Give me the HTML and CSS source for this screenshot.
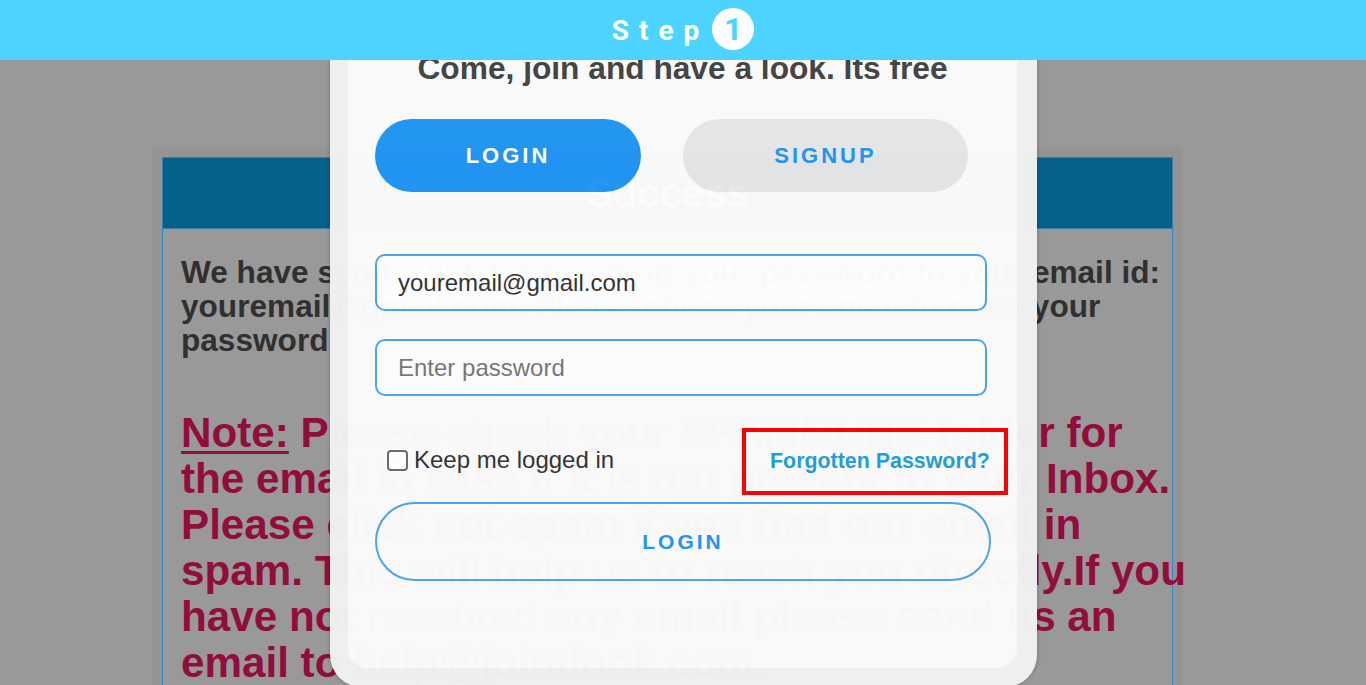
FILE: index.html
```html
<!DOCTYPE html>
<html lang="en">
<head>
<meta charset="utf-8">
<title>Step 1</title>
<link rel="stylesheet" href="styles.css">
</head>
<body>
<div class="stepbar">
  <span class="step-word">Step</span>
  <span class="step-num">1</span>
</div>

<div class="page">
  <div class="notice">
    <div class="notice-head">Success</div>
    <div class="notice-body">
      <p class="sent">We have send a link for resetting your password to your email id:<br>youremail@gmail.com. Please check your email to reset your<br>password.</p>
      <p class="note"><u>Note:</u> Please check your SPAM/JUNK folder for<br>the email in case if it is not present in your Inbox.<br>Please click not spam if you find our email in<br>spam. This will help us to reach you directly.If you<br>have not received any email please send us an<br>email to help@jointlook.com.</p>
    </div>
  </div>
</div>

<div class="modal">
  <div class="modal-inner">
    <div class="title">Come, join and have a look. Its free</div>
    <div class="tabs">
      <div class="tab tab-active">LOGIN</div>
      <div class="tab tab-idle">SIGNUP</div>
    </div>
    <div class="field field-email">youremail@gmail.com</div>
    <div class="field field-pass">Enter password</div>
    <div class="row">
      <label class="keep"><span class="box"></span>Keep me logged in</label>
      <div class="highlight"><span class="forgot">Forgotten Password?</span></div>
    </div>
    <div class="submit">LOGIN</div>
  </div>
</div>
</body>
</html>
```

FILE: styles.css
```css
html, body {
  margin: 0;
  padding: 0;
}
body {
  width: 1366px;
  height: 685px;
  overflow: hidden;
  background: #999999;
  font-family: "Liberation Sans", Arial, sans-serif;
  position: relative;
}

/* top step bar */
.stepbar {
  position: absolute;
  top: 0;
  left: 0;
  right: 0;
  height: 60px;
  background: #4cd3ff;
  z-index: 10;
  display: flex;
  align-items: center;
  justify-content: center;
}
.step-word {
  font-family: Roboto, "Liberation Sans", sans-serif;
  font-weight: 700;
  font-size: 28px;
  letter-spacing: 10px;
  color: #ffffff;
  line-height: 1;
  margin-right: 3px;
  margin-top: 2px;
}
.step-num {
  width: 42px;
  height: 42px;
  border-radius: 50%;
  background: #ffffff;
  color: #4cd3ff;
  font-family: Roboto, "Liberation Sans", sans-serif;
  font-weight: 700;
  font-size: 32px;
  display: flex;
  align-items: center;
  justify-content: center;
  line-height: 1;
  margin-top: -2px;
}

/* background dialog */
.page {
  padding: 147px 0 0 152px;
}
.notice {
  width: 1031px;
  box-sizing: border-box;
  background: #949494;
  border-radius: 6px 6px 0 0;
  padding: 10px 10px 0 10px;
}
.notice-head {
  height: 72px;
  box-sizing: border-box;
  background: #06618a;
  border: 1px solid #3a7fae;
  color: #ffffff;
  font-weight: 700;
  font-size: 40px;
  display: flex;
  align-items: center;
  justify-content: center;
}
.notice-body {
  border-left: 1px solid #2f86c6;
  border-right: 1px solid #2f86c6;
  background: #999999;
  padding: 26px 0 40px 18px;
  white-space: nowrap;
}
.sent {
  margin: 0;
  font-weight: 700;
  font-size: 31.6px;
  line-height: 34px;
  color: #303030;
}
.note {
  margin: 53px 0 0 0;
  font-weight: 700;
  font-size: 42.2px;
  line-height: 46px;
  color: #920d3c;
}
.note u {
  text-decoration-thickness: 3px;
  text-underline-offset: 4px;
}

/* modal overlay */
.modal {
  position: absolute;
  left: 330px;
  top: -18px;
  width: 707px;
  box-sizing: border-box;
  padding: 18px 20px 19px 18px;
  background: #f2f2f2;
  border-radius: 0 0 32px 32px;
  box-shadow: 0 0 4px rgba(0, 0, 0, 0.25);
  opacity: 0.975;
  z-index: 5;
}
.modal-inner {
  background: #fcfcfc;
  border-radius: 20px;
  padding: 50px 30px 87px 27px;
}
.title {
  font-weight: 700;
  font-size: 31.7px;
  line-height: 36px;
  color: #444444;
  text-align: center;
  white-space: nowrap;
  margin-right: -3px;
}
.tabs {
  display: flex;
  gap: 42px;
  margin-top: 33px;
}
.tab {
  height: 73px;
  border-radius: 37px;
  display: flex;
  align-items: center;
  justify-content: center;
  font-weight: 700;
  font-size: 22px;
  letter-spacing: 3px;
}
.tab-active {
  width: 266px;
  background: #2196f3;
  color: #ffffff;
}
.tab-idle {
  width: 285px;
  background: #e7e7e7;
  color: #2196f3;
}
.field {
  width: 612px;
  height: 57px;
  box-sizing: border-box;
  border: 2px solid #4aa6f0;
  border-radius: 10px;
  background: #ffffff;
  padding-left: 21px;
  display: flex;
  align-items: center;
  font-size: 24px;
}
.field-email {
  margin-top: 62px;
  color: #333333;
}
.field-pass {
  margin-top: 28px;
  color: #777777;
}
.row {
  margin-top: 32px;
  width: 633px;
  height: 67px;
  display: flex;
  align-items: center;
  justify-content: space-between;
}
.keep {
  display: flex;
  align-items: center;
  gap: 6px;
  padding-left: 12px;
  font-size: 24px;
  color: #333333;
  margin-top: -3px;
}
.box {
  width: 21px;
  height: 21px;
  box-sizing: border-box;
  border: 2px solid #6a6a6a;
  border-radius: 4px;
  background: #ffffff;
}
.highlight {
  height: 67px;
  width: 266px;
  box-sizing: border-box;
  border: 4px solid #ff0000;
  padding: 0 14px 0 24px;
  display: flex;
  align-items: center;
}
.forgot {
  font-weight: 700;
  font-size: 21.4px;
  color: #1e9fd9;
  white-space: nowrap;
  margin-top: -1px;
}
.submit {
  margin-top: 7px;
  width: 616px;
  height: 79px;
  box-sizing: border-box;
  border: 2px solid #4aa6f0;
  border-radius: 40px;
  display: flex;
  align-items: center;
  justify-content: center;
  font-weight: 700;
  font-size: 21px;
  letter-spacing: 3px;
  color: #2196f3;
}
```
